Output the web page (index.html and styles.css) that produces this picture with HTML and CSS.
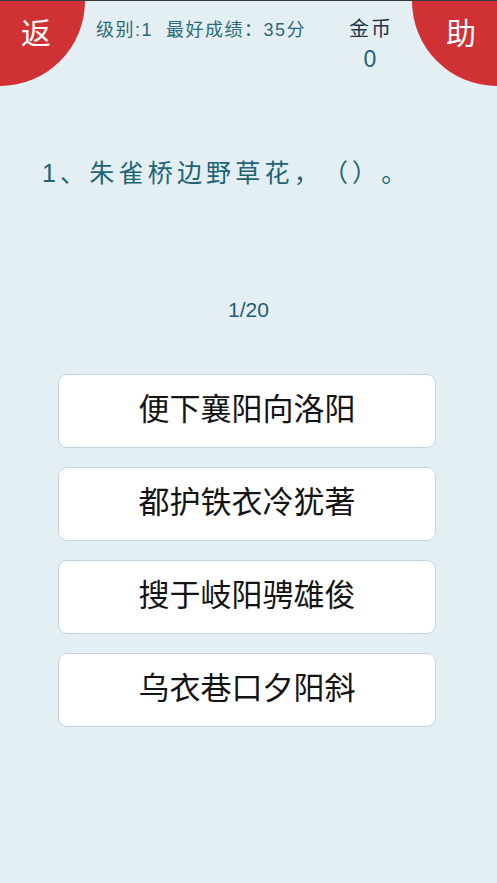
FILE: index.html
```html
<!DOCTYPE html>
<html lang="zh">
<head>
<meta charset="utf-8">
<link rel="stylesheet" href="styles.css">
</head>
<body>
<div class="topline"></div>
<header class="header">
  <div class="corner corner-left">返</div>
  <div class="info">
    <div class="level">级别:1&nbsp;&nbsp;最好成绩：35分</div>
    <div class="coins">
      <div class="coins-label">金币</div>
      <div class="coins-value">0</div>
    </div>
  </div>
  <div class="corner corner-right">助</div>
</header>
<main class="main">
  <div class="question">1、朱雀桥边野草花，（）。</div>
  <div class="progress">1/20</div>
  <div class="options">
    <div class="option">便下襄阳向洛阳</div>
    <div class="option">都护铁衣冷犹著</div>
    <div class="option">搜于岐阳骋雄俊</div>
    <div class="option">乌衣巷口夕阳斜</div>
  </div>
</main>
</body>
</html>
```
FILE: styles.css
```css
html, body {
  margin: 0;
  padding: 0;
}
body {
  background: #e3eff2;
  font-family: "Liberation Sans", "Noto Sans CJK SC", sans-serif;
  width: 497px;
  height: 883px;
  overflow: hidden;
}
.topline {
  height: 1px;
  background: #3a3a3a;
}
.header {
  display: flex;
  height: 85px;
}
.corner {
  width: 85px;
  height: 85px;
  background: #cf3134;
  color: #fff;
  font-size: 30px;
  line-height: 30px;
  box-sizing: border-box;
  padding-top: 18px;
  flex: none;
}
.corner-left {
  border-bottom-right-radius: 100%;
  padding-left: 21px;
}
.corner-right {
  border-bottom-left-radius: 100%;
  padding-left: 34px;
}
.info {
  flex: 1;
  display: flex;
  justify-content: space-between;
  padding-left: 11px;
  padding-right: 19px;
}
.level {
  color: #2b6a7a;
  font-size: 18px;
  letter-spacing: 1.5px;
  line-height: 20px;
  padding-top: 19px;
  white-space: nowrap;
  text-spacing-trim: space-all;
}
.coins {
  display: flex;
  flex-direction: column;
  align-items: center;
  width: 46px;
}
.coins-label {
  color: #1e3448;
  font-size: 20px;
  letter-spacing: 2px;
  margin-right: -2px;
  line-height: 20px;
  padding-top: 18px;
}
.coins-value {
  color: #1f6475;
  font-size: 23px;
  line-height: 24px;
  padding-top: 8px;
}
.main {
  display: flex;
  flex-direction: column;
}
.question {
  margin-top: 72px;
  padding-left: 42px;
  color: #1f6475;
  font-size: 25px;
  letter-spacing: 4.2px;
  line-height: 30px;
  white-space: nowrap;
  text-spacing-trim: space-all;
}
.progress {
  margin-top: 110px;
  text-align: center;
  color: #1e5e70;
  font-size: 21px;
  line-height: 24px;
}
.options {
  margin-top: 52px;
  margin-left: 58px;
  width: 378px;
  display: flex;
  flex-direction: column;
  gap: 19px;
}
.option {
  height: 74px;
  box-sizing: border-box;
  background: #fff;
  border: 1px solid #c2d5de;
  border-radius: 9px;
  display: flex;
  align-items: center;
  justify-content: center;
  color: #141414;
  font-size: 31px;
  line-height: 36px;
  padding-bottom: 2px;
}
```
